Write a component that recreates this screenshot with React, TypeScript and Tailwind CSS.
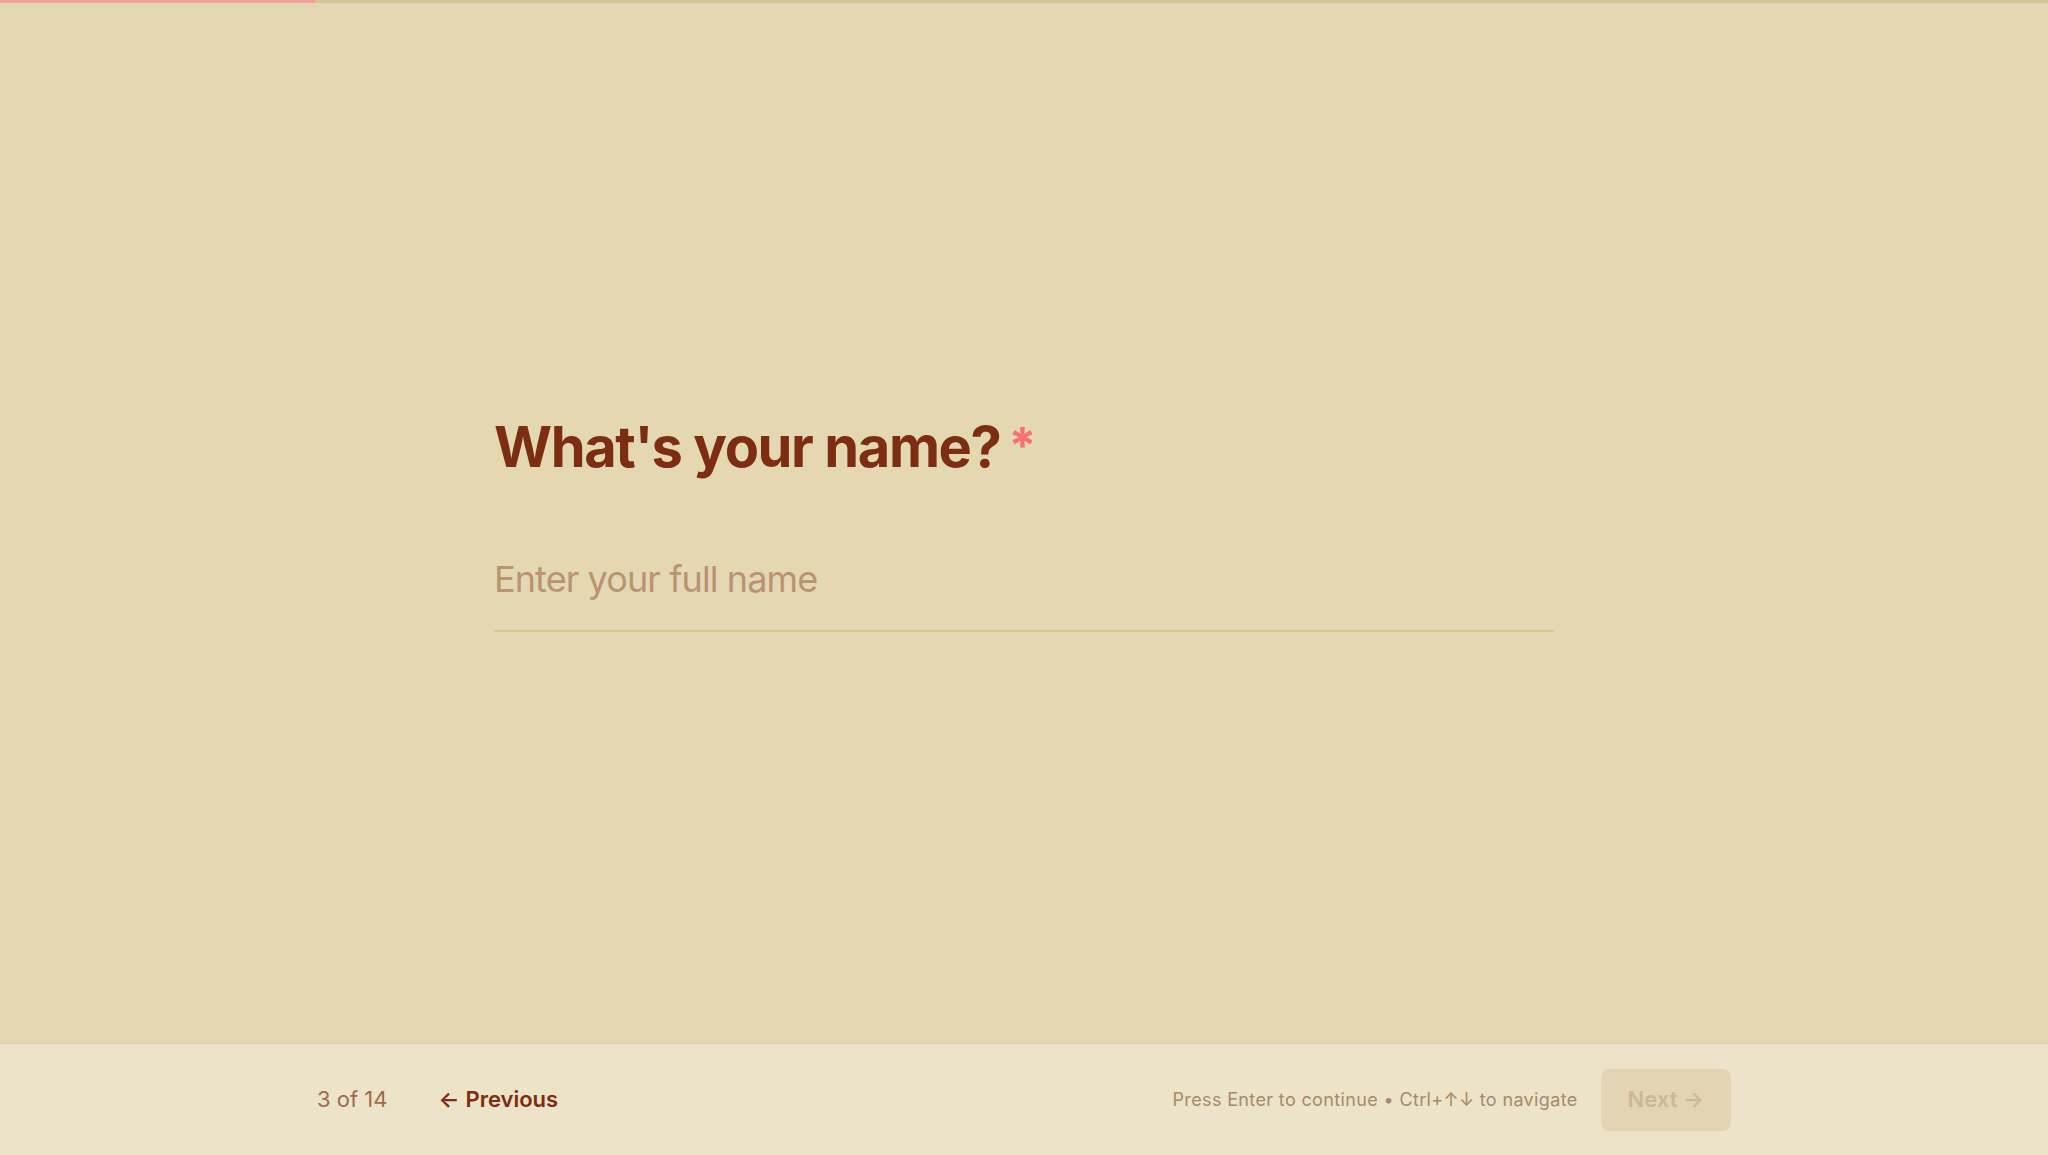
import { useState } from "react";

export default function App() {
  const [name, setName] = useState("");

  return (
    <div
      className="h-[1155px] flex flex-col bg-[#e4d8b2] overflow-hidden"
      style={{ fontFamily: "Inter, 'Noto Sans', sans-serif" }}
    >
      {/* progress */}
      <div className="h-[3px] bg-[#d5c794] shrink-0">
        <div className="h-full w-[315px] bg-[#f5a09a]" />
      </div>

      <main className="flex-1 flex items-center justify-center pt-[5px]">
        <div className="w-[1060px]">
          <h1 className="text-[56px] font-bold leading-none tracking-tight text-[#7c2d12]">
            What's your name?
            <span className="ml-2 align-[0.08em] text-[50px] text-[#f87171]">*</span>
          </h1>
          <input
            value={name}
            onChange={(e) => setName(e.target.value)}
            placeholder="Enter your full name"
            className="mt-[66px] w-full bg-transparent border-b-2 border-[#d5c790] pt-4 pb-7 text-[36px] leading-[45px] tracking-tight text-[#7c2d12] outline-none placeholder:text-[#b99372]"
          />
        </div>
      </main>

      <footer className="h-[112px] shrink-0 border-t border-[#ddd0a8] bg-[#ede3c9]">
        <div className="w-[1414px] mx-auto h-full flex items-center justify-between">
          <div className="flex items-center gap-[51px] text-[22px]">
            <span className="text-[#9c6a4c]">3 of 14</span>
            <button className="flex items-center gap-1.5 font-semibold text-[#7c2d12]">
              <span>←</span>
              <span>Previous</span>
            </button>
          </div>
          <div className="flex items-center gap-[23px]">
            <span className="text-[18px] tracking-[0.02em] text-[#a68a69]">
              Press Enter to continue • Ctrl+↑↓ to navigate
            </span>
            <button
              disabled
              className="h-[62px] px-[27px] rounded-lg bg-[#e3d4b4] text-[22px] font-semibold text-[#cbb897]"
            >
              Next →
            </button>
          </div>
        </div>
      </footer>
    </div>
  );
}
